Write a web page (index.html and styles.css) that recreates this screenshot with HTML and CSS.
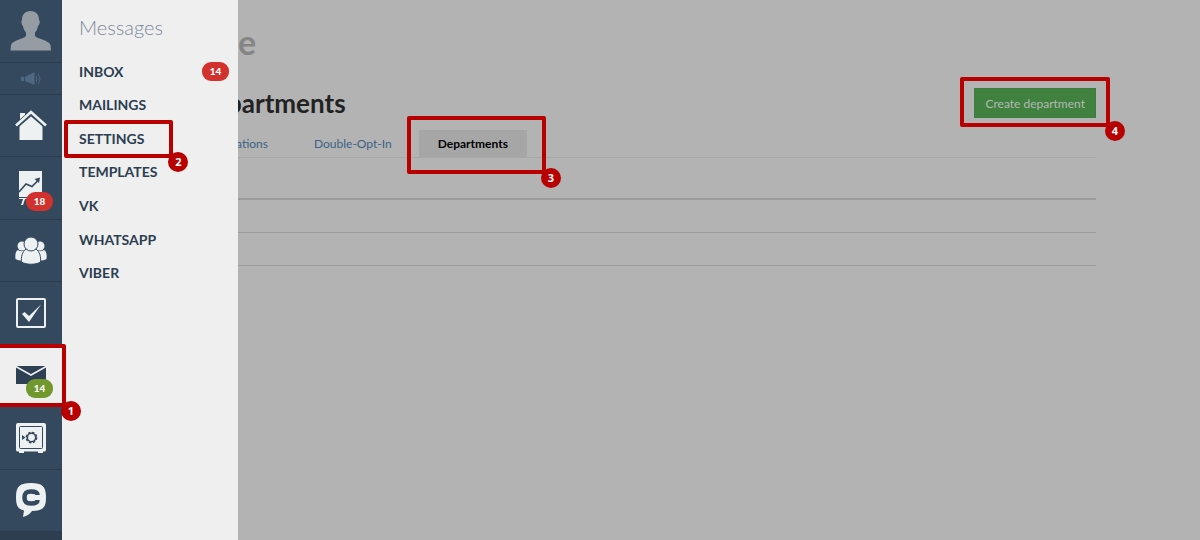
FILE: index.html
```html
<!DOCTYPE html>
<html lang="en">
<head>
    <meta charset="UTF-8">
    <meta name="viewport" content="width=device-width, initial-scale=1.0">
    <title>Departments</title>
    <link rel="stylesheet" href="styles.css">
</head>

<body>
    <div class="app">
        <nav class="sidebar" aria-label="Main">
            <a class="side-item side-profile" href="#" aria-label="Profile">
                <svg width="42" height="40" viewBox="0 0 42 40" fill="#959ca4">
                    <path d="M20.500 0c5.500 0 8.500 3.500 8.500 9 1.500 1 .5 5-1 6-.5 3-1.500 5-3 6.500v3.500c2 3 14 4 15.500 9l.5 5.500H.5L1 34c1.500-5 13-6 15-9v-3.500c-1.500-1.500-2.500-3.500-3-6.500-1.500-1-2-5-1-6 0-5.500 3-9 8.500-9z"/>
                </svg>
            </a>
            <a class="side-item side-news" href="#" aria-label="News">
                <svg width="20" height="14" viewBox="0 0 20 14" fill="#4f6782">
                    <path d="M0 5h3v4H0zM4 5l9.500-5v13L4 9z"/>
                    <path d="M15 4q2 3 0 6M17 2q4 5 0 10" fill="none" stroke="#4f6782"/>
                </svg>
            </a>
            <a class="side-item" href="#" aria-label="Home">
                <svg width="32" height="32" viewBox="0 0 32 32" fill="#edf1f2">
                    <path d="M5 3h5v3L5 10zM16 5l11.500 10v15h-23V15z"/>
                    <path d="M1 16L16 3l15 13" fill="none" stroke="#34495e" stroke-width="5"/>
                    <path d="M1 15.500L16 2l15 13.500" fill="none" stroke="#edf1f2" stroke-width="2.600"/>
                </svg>
            </a>
            <a class="side-item" href="#" aria-label="Reports">
                <svg width="32" height="34" viewBox="0 0 32 34">
                    <path d="M4 0h23v26H4zM4 27h23v1H4zM8 28h2l-2 6H6zM12 28h2v4h-2z" fill="#edf1f2"/>
                    <path d="M4 21l7-8 6 2.500 6-6" fill="none" stroke="#34495e" stroke-width="1.600"/>
                    <path d="M19.500 8L25 6.500 24 12z" fill="#34495e"/>
                </svg>
                <span class="badge side-badge">18</span>
            </a>
            <a class="side-item" href="#" aria-label="Clients">
                <svg width="32" height="28" viewBox="0 0 32 28" fill="#edf1f2">
                    <circle cx="7" cy="9" r="4.500"/>
                    <circle cx="25" cy="9" r="4.500"/>
                    <path d="M3 13c3 2 5 1 8 0v11c-4 0-8-.5-10.500-2C0 18 .5 14 3 13zM29 13c-3 2-5 1-8 0v11c4 0 8-.5 10.500-2 .5-4 0-8-2.500-9z"/>
                    <g stroke="#34495e">
                        <path d="M11 12h10c4 3 5 8 4.500 13-5 3-14 3-19 0C6 20 7 15 11 12z"/>
                        <circle cx="16" cy="7" r="7"/>
                    </g>
                </svg>
            </a>
            <a class="side-item" href="#" aria-label="Tasks">
                <svg width="32" height="32" viewBox="0 0 32 32">
                    <rect x="2" y="2" width="28" height="28" rx="1" fill="none" stroke="#edf1f2" stroke-width="2"/>
                    <path d="M7 17l2.500-2 4.500 4L26 7.500 14 25z" fill="#edf1f2"/>
                </svg>
            </a>
            <a class="side-item side-current" href="#" aria-label="Messages">
                <svg width="32" height="18" viewBox="0 0 32 18">
                    <path d="M1 0h30v18H1z" fill="#2e4053"/>
                    <path d="M0 0l16 9L32 0" fill="none" stroke="#efefef" stroke-width="1.600"/>
                </svg>
                <span class="badge badge-green side-badge">14</span>
                <span class="mark mark-nav"><b class="mark-num">1</b></span>
            </a>
            <a class="side-item" href="#" aria-label="Finance">
                <svg width="32" height="32" viewBox="0 0 32 32">
                    <path d="M3 1h26q2 0 2 2v25q0 1.500-2 1.500h-1V31h-5v-1.500H9V31H4v-1.500H3q-2 0-2-1.500V3q0-2 2-2z" fill="#edf1f2"/>
                    <rect x="4.500" y="4.500" width="23" height="22" rx="1" fill="none" stroke="#34495e"/>
                    <circle cx="16.500" cy="15.500" r="4.200" fill="none" stroke="#34495e" stroke-width="1.600"/>
                    <circle cx="16.500" cy="15.500" r="5.200" fill="none" stroke="#34495e" stroke-width="1.400" stroke-dasharray="2.400 1.680"/>
                    <path d="M7 13l3.500 2.500L7 18z" fill="#34495e"/>
                </svg>
            </a>
            <a class="side-item" href="#" aria-label="Chat">
                <svg width="32" height="34" viewBox="0 0 32 34">
                    <path d="M16 0c11 0 15 3 15 14s-3 13.500-14 14c-2 3-5 5-9 6l1-6.500C3 26 1 23 1 14 1 3 5 0 16 0z" fill="#edf1f2"/>
                    <path d="M22.500 12c0-3-2-3.500-6.500-3.500S9.500 10 9.500 14.500s2 6 6.500 6 6.500-.5 6.500-3.500" fill="none" stroke="#34495e" stroke-width="4.600"/>
                </svg>
            </a>
        </nav>

        <aside class="menu">
            <h2 class="menu-title">Messages</h2>
            <ul class="menu-list">
                <li><a class="menu-link" href="#">INBOX</a><span class="badge">14</span></li>
                <li><a class="menu-link" href="#">MAILINGS</a></li>
                <li><a class="menu-link" href="#">SETTINGS<span class="mark mark-menu"><b class="mark-num">2</b></span></a></li>
                <li><a class="menu-link" href="#">TEMPLATES</a></li>
                <li><a class="menu-link" href="#">VK</a></li>
                <li><a class="menu-link" href="#">WHATSAPP</a></li>
                <li><a class="menu-link" href="#">VIBER</a></li>
            </ul>
        </aside>

        <main class="page">
            <div class="account">e</div>
            <div class="page-head">
                <h1 class="page-title">partments</h1>
                <button class="create" type="button">Create department<span class="mark mark-button"><b class="mark-num">4</b></span></button>
            </div>
            <nav class="tabs" aria-label="Settings">
                <a class="tab" href="#">ations</a>
                <a class="tab" href="#">Double-Opt-In</a>
                <a class="tab tab-current" href="#">Departments<span class="mark mark-tab"><b class="mark-num">3</b></span></a>
            </nav>
            <div class="rows">
                <div class="row row-head"></div>
                <div class="row"></div>
                <div class="row"></div>
            </div>
        </main>
    </div>
</body>
</html>
```
FILE: styles.css
```css
*, *:before, *:after {
    box-sizing: border-box;
}

body {
    margin: 0;
    font-family: Lato, "Liberation Sans", sans-serif;
    font-size: 14px;
    background-color: #b3b3b3;
}

a {
    color: inherit;
    text-decoration: none;
}

.app {
    display: flex;
    min-height: 100vh;
}

/* sidebar */
.sidebar {
    position: relative;
    z-index: 2;
    display: flex;
    flex-direction: column;
    flex: none;
    width: 62px;
    padding-bottom: 8px;
    background: linear-gradient(#2c3e50, #2c3e50) bottom / 100% 8px no-repeat #34495e;
}

.side-item {
    position: relative;
    display: flex;
    flex: 1 0 56px;
    align-items: center;
    justify-content: center;
    border-bottom: 1px solid #2b3d4f;
}

.side-profile {
    flex: none;
    height: 63px;
}

.side-news {
    flex: none;
    height: 32px;
}

.side-current {
    background-color: #efefef;
}

.badge {
    width: 27px;
    height: 19px;
    border-radius: 9px;
    background-color: #d2322d;
    color: #fff;
    font-size: 10px;
    font-weight: 900;
    line-height: 19px;
    text-align: center;
}

.badge-green {
    background-color: #71982c;
}

.side-badge {
    position: absolute;
    left: 26px;
    bottom: 8px;
}

/* second level menu, lies over the page */
.menu {
    position: relative;
    z-index: 1;
    flex: none;
    width: 176px;
    padding: 15px 9px 0 17px;
    background-color: #efefef;
    color: #2c3e50;
}

.menu-title {
    margin: 0 0 16px;
    color: #7d879a;
    font-size: 20px;
    font-weight: 300;
    line-height: 24px;
}

.menu-list {
    display: grid;
    grid-auto-rows: 1fr;
    height: 235px;
    margin: 0;
    padding: 0;
    list-style: none;
}

.menu-list li {
    display: flex;
    align-items: center;
    justify-content: space-between;
}

.menu-link {
    position: relative;
    font-weight: 700;
    line-height: 20px;
}

/* page */
.page {
    flex: 1;
    min-width: 0;
    padding: 22px 104px 0 0;
}

.account {
    color: #858585;
    font-size: 34px;
    font-weight: 700;
    line-height: 40px;
}

.page-head {
    display: flex;
    align-items: center;
    justify-content: space-between;
    margin-top: 26px;
}

.page-title {
    margin: 0 0 0 -11px;
    color: #222;
    font-size: 26px;
    font-weight: 700;
    line-height: 28px;
}

.create {
    position: relative;
    height: 30px;
    padding: 0 10px;
    border: 1px solid #3d7d3d;
    background-color: #408140;
    color: #b3b9b3;
    font-family: inherit;
    font-size: 12px;
}

.tabs {
    display: flex;
    gap: 8px;
    margin: 12px 0 0 -21px;
    border-bottom: 1px solid #a8a8a8;
}

.tab {
    position: relative;
    padding: 0 19px;
    color: #3c5f86;
    font-size: 12px;
    line-height: 27px;
}

.tab-current {
    background-color: #a6a6a6;
    color: #000;
    font-weight: 700;
}

.row {
    height: 33px;
    border-bottom: 1px solid #9b9b9b;
}

.row-head {
    height: 42px;
    border-bottom-width: 2px;
}

/* numbered frames */
.mark {
    position: absolute;
    border: 4px solid #b80000;
    border-radius: 2px;
    pointer-events: none;
    z-index: 1;
}

.mark-num {
    position: absolute;
    right: -19px;
    bottom: -18px;
    width: 20px;
    height: 20px;
    border-radius: 50%;
    background-color: #b80000;
    color: #fff;
    font: 700 11px/20px "Open Sans", sans-serif;
    text-align: center;
}

.mark-nav {
    inset: -1px -4px -1px -4px;
}

.mark-menu {
    inset: -9px -29px -9px -15px;
}

.mark-tab {
    inset: -14px -19px -17px -12px;
}

.mark-button {
    inset: -12px -15px -10px -15px;
}
```
